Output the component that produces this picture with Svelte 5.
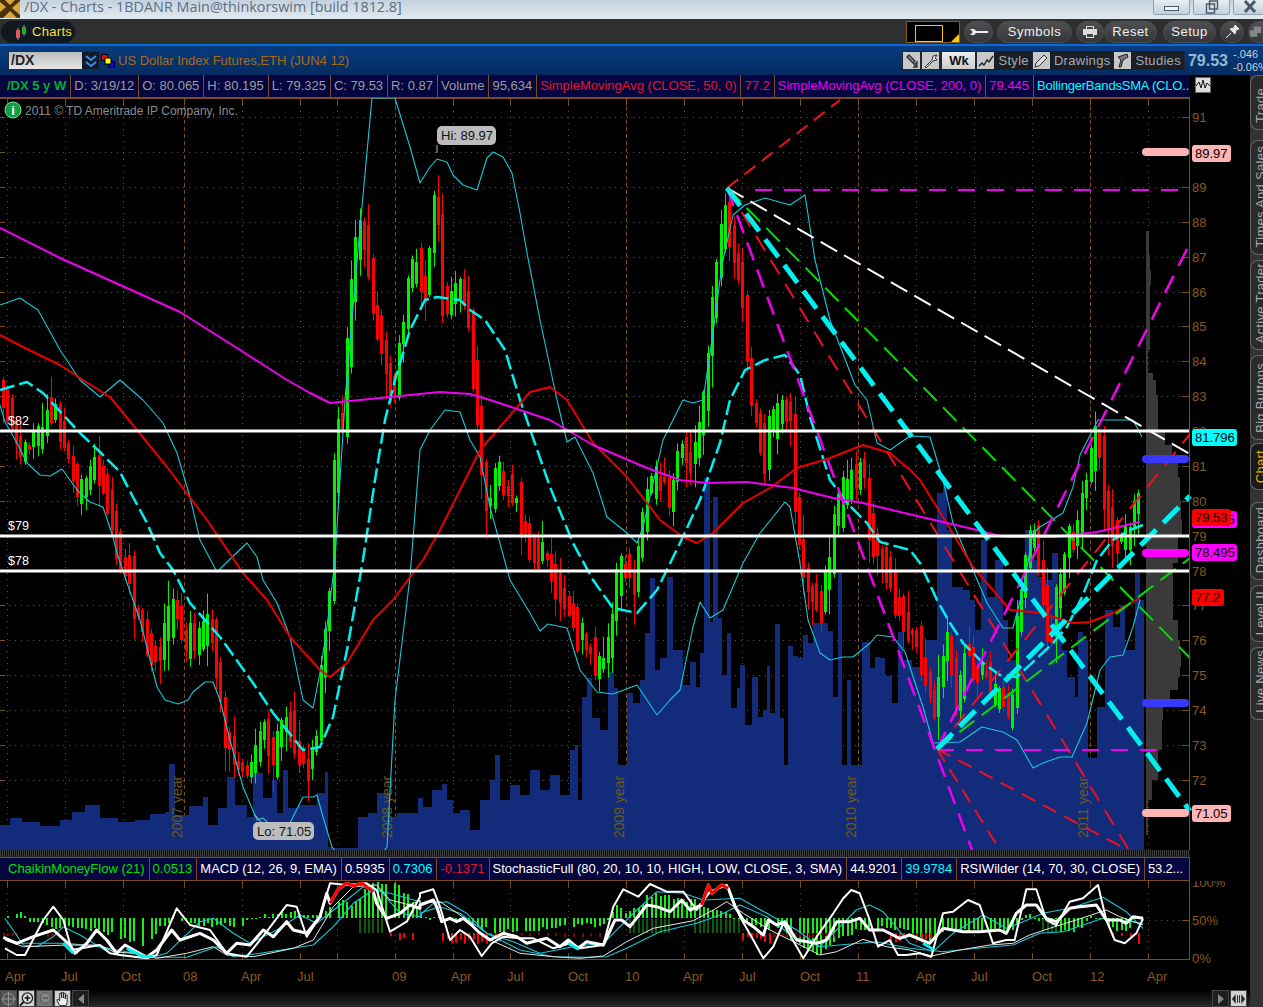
<script>
  // zoom crops were read at 3x, z() maps them back to page pixels
  const z = (ox, oy, a) => a.map(([x, y]) => [ox + x / 3, oy + y / 3]);
  const pts = (a) => a.map(([x, y]) => `${x.toFixed(1)},${y.toFixed(1)}`).join(' ');
  const joinPanels = (l, m, r) => [...z(0, 850, l), ...z(420, 850, m).filter((p) => p[0] < 846), ...z(843, 850, r).filter((p) => p[0] >= 846)];

  function interp(a, x) {
    if (x <= a[0][0]) return a[0][1];
    for (let i = 1; i < a.length; i++) {
      if (x <= a[i][0]) {
        const t = (x - a[i - 1][0]) / (a[i][0] - a[i - 1][0] || 1);
        return a[i - 1][1] + t * (a[i][1] - a[i - 1][1]);
      }
    }
    return a[a.length - 1][1];
  }

  let seed = 17;
  const rnd = () => ((seed = (seed * 16807) % 2147483647) / 2147483647);

  const sma50 = [[0,335],[25,348],[60,365],[83,380],[110,397],[137,430],[167,467],[207,520],[243,573],[267,600],[290,637],[320,670],[330,677],[347,663],[373,620],[393,600],[410,577],[423,560],[440,530],[470,470],[480,450],[500,427],[530,392],[550,387],[567,400],[593,443],[627,477],[660,520],[683,537],[697,543],[713,533],[743,503],[770,488],[797,468],[830,458],[863,445],[890,453],[910,470],[920,480],[943,517],[973,567],[1010,610],[1040,613],[1073,623],[1090,622],[1113,613],[1140,598]];
  const sma200 = [[0,228],[60,258],[120,285],[180,312],[240,350],[287,380],[310,393],[330,403],[350,401],[390,397],[440,392],[470,394],[490,400],[520,410],[550,420],[593,445],[647,468],[680,480],[707,483],[747,482],[793,488],[833,498],[863,503],[900,512],[943,522],[977,530],[1003,537],[1053,537],[1097,532],[1140,522]];
  const bbUp = [[0,305],[20,298],[38,310],[60,350],[80,380],[100,397],[120,380],[143,400],[163,423],[177,453],[190,497],[200,540],[217,572],[227,562],[247,543],[257,557],[263,580],[277,603],[290,637],[303,700],[313,708],[320,673],[327,627],[335,560],[345,400],[358,250],[372,98],[395,98],[410,147],[420,183],[430,167],[437,159],[447,162],[453,175],[463,185],[477,190],[487,158],[493,152],[503,157],[512,173],[520,213],[527,253],[540,320],[557,400],[567,442],[575,437],[593,473],[607,517],[627,533],[637,543],[643,527],[663,440],[683,400],[693,403],[703,400],[712,340],[722,265],[733,215],[745,205],[765,198],[790,205],[805,195],[815,260],[830,320],[855,385],[867,400],[877,443],[890,450],[910,436],[930,437],[943,480],[953,523],[970,563],[987,603],[1003,628],[1013,628],[1023,590],[1033,533],[1040,527],[1063,513],[1073,487],[1080,455],[1098,420],[1120,420],[1133,420],[1142,437]];
  const bbLow = [[0,405],[5,422],[17,443],[27,463],[40,475],[50,476],[62,469],[70,480],[77,490],[90,502],[103,507],[113,537],[117,553],[127,583],[140,620],[157,687],[165,700],[178,704],[188,700],[193,692],[205,682],[213,682],[220,700],[230,740],[243,787],[257,820],[263,818],[283,837],[293,817],[303,797],[313,797],[317,795],[323,817],[332,847],[336,852],[383,852],[387,847],[395,700],[410,577],[420,450],[430,430],[445,410],[460,412],[470,440],[480,457],[490,507],[510,580],[530,613],[540,631],[548,624],[567,628],[580,670],[597,692],[613,694],[637,685],[657,715],[670,700],[680,690],[693,627],[700,602],[710,618],[723,610],[743,563],[760,533],[773,517],[785,502],[790,507],[800,563],[808,620],[820,653],[830,660],[843,657],[853,657],[870,643],[877,635],[893,637],[905,652],[923,707],[933,743],[960,742],[982,727],[1003,732],[1017,740],[1033,768],[1043,763],[1060,757],[1072,757],[1087,723],[1100,670],[1110,657],[1123,655],[1133,627],[1140,600]];
  const bbMid = [[0,390],[27,382],[43,393],[80,433],[100,452],[120,472],[133,497],[147,523],[160,553],[173,570],[190,603],[220,637],[253,683],[273,713],[303,750],[320,747],[333,717],[347,650],[363,560],[375,480],[385,420],[395,380],[410,330],[425,300],[437,297],[460,300],[470,310],[485,320],[505,350],[520,400],[550,487],[573,543],[593,580],[613,608],[637,613],[657,590],[680,543],[700,500],[720,443],[730,400],[745,370],[765,360],[785,355],[800,375],[810,417],[830,480],[847,503],[867,523],[880,542],[910,550],[920,563],[937,600],[950,623],[963,643],[983,663],[1000,675],[1017,677],[1053,643],[1067,627],[1082,597],[1097,560],[1113,540],[1130,530],[1143,525]];
  const closes = [[5,400],[17,447],[27,450],[32,442],[43,423],[53,413],[62,437],[67,453],[72,477],[75,497],[80,483],[88,490],[93,463],[98,473],[107,503],[115,537],[122,573],[128,567],[133,600],[142,627],[152,653],[160,653],[169,610],[178,610],[183,647],[192,637],[200,643],[205,633],[213,633],[218,687],[227,747],[232,760],[240,767],[250,770],[255,750],[263,730],[272,763],[285,717],[290,727],[295,750],[303,760],[308,767],[317,733],[322,660],[326,613],[330,593],[334,475],[338,427],[343,423],[350,300],[358,220],[365,240],[372,310],[380,340],[392,400],[400,340],[408,280],[415,260],[425,290],[432,210],[437,190],[443,320],[450,300],[460,290],[467,310],[475,390],[481,467],[487,513],[490,500],[495,472],[500,477],[508,488],[517,503],[522,527],[530,547],[540,557],[548,563],[553,587],[562,610],[567,603],[575,633],[583,643],[593,657],[602,660],[607,657],[612,623],[615,580],[620,563],[628,570],[633,590],[637,563],[642,517],[647,493],[655,480],[660,480],[670,493],[673,480],[678,447],[687,460],[695,450],[700,417],[705,400],[710,330],[717,260],[725,205],[730,240],[737,270],[745,330],[750,400],[758,417],[763,467],[767,433],[782,400],[790,420],[794,480],[798,540],[803,577],[812,590],[817,600],[820,610],[825,587],[830,557],[834,517],[838,507],[843,493],[848,477],[852,473],[857,487],[861,473],[866,487],[870,540],[878,560],[883,557],[887,573],[892,587],[897,610],[902,610],[906,623],[910,637],[915,630],[920,653],[923,672],[928,687],[933,707],[937,690],[942,660],[946,643],[951,663],[955,697],[959,687],[963,663],[968,645],[973,670],[977,677],[982,673],[986,673],[990,693],[994,697],[999,693],[1003,703],[1008,713],[1013,700],[1017,630],[1027,547],[1031,537],[1036,533],[1039,573],[1044,610],[1049,647],[1052,627],[1057,583],[1062,580],[1066,530],[1071,530],[1076,547],[1080,503],[1085,483],[1088,470],[1093,445],[1098,430],[1102,483],[1107,510],[1115,537],[1120,533],[1124,540],[1129,533],[1133,510],[1142,508]];
  const volume = [[0,825],[10,818],[22,822],[40,826],[60,820],[72,812],[85,805],[100,818],[118,822],[135,820],[150,814],[165,812],[169,764],[175,815],[189,806],[203,797],[208,825],[218,808],[227,777],[235,805],[247,817],[253,773],[263,798],[272,780],[277,813],[283,770],[288,808],[298,805],[307,805],[317,793],[325,772],[328,847],[333,848],[358,817],[368,813],[377,793],[383,793],[390,817],[397,813],[410,813],[418,798],[423,807],[432,790],[442,784],[447,800],[453,813],[460,810],[470,830],[480,800],[490,780],[495,755],[500,800],[510,785],[520,795],[530,770],[540,790],[550,775],[560,795],[570,750],[575,745],[578,800],[582,697],[587,678],[592,718],[600,730],[608,672],[614,688],[618,765],[627,693],[633,703],[640,680],[645,633],[650,578],[655,670],[660,658],[667,577],[673,650],[683,685],[690,662],[696,687],[700,653],[704,478],[710,622],[713,497],[718,618],[722,675],[727,633],[731,708],[737,688],[740,665],[745,725],[752,677],[758,717],[763,710],[767,666],[770,713],[775,624],[780,718],[784,765],[788,646],[793,656],[798,658],[803,635],[808,643],[813,623],[820,623],[828,631],[833,697],[838,573],[842,765],[847,680],[851,765],[862,642],[870,668],[875,657],[880,658],[885,676],[892,703],[898,632],[903,660],[912,667],[925,640],[937,493],[943,480],[947,530],[952,587],[963,590],[970,600],[975,630],[981,540],[987,597],[995,560],[1003,620],[1008,660],[1017,600],[1025,530],[1032,560],[1038,577],[1043,580],[1052,553],[1058,607],[1062,650],[1067,677],[1075,697],[1078,632],[1083,640],[1088,758],[1097,707],[1105,610],[1113,627],[1120,605],[1125,650],[1135,573],[1140,600],[1144,850]];
  const profile = [[231,1149],[255,1150],[270,1151],[285,1150],[350,1148],[373,1153],[380,1156],[395,1158],[420,1158],[430,1165],[445,1172],[460,1178],[477,1180],[500,1181],[520,1182],[535,1178],[563,1173],[590,1173],[620,1178],[640,1180],[653,1181],[667,1180],[677,1178],[690,1170],[707,1163],[720,1162],[750,1158],[780,1152],[800,1148],[835,1146]];

  const volPath = 'M0,850 ' + volume.map(([x, y], i) => `L${x},${y} L${volume[i + 1]?.[0] ?? x},${y}`).join(' ') + ' Z';
  const profPath = 'M1146,231 ' + profile.map(([y, x], i) => `L${x},${y} L${x},${profile[i + 1]?.[0] ?? y}`).join(' ') + ' L1146,835 Z';

  const candles = [];
  let prev = 395;
  for (let i = 0; i < 262; i++) {
    const x = Math.round(3 + i * 4.35);
    const c = interp(closes, x) + (rnd() - 0.5) * 10;
    const o = prev + (rnd() - 0.5) * 6;
    const top = Math.round(Math.min(o, c) - rnd() * 16);
    const bot = Math.round(Math.max(o, c) + rnd() * 16);
    candles.push({
      x, up: c < o, top,
      h: Math.max(bot - top, 3),
      wt: top - 2 - rnd() * rnd() * 26,
      wb: bot + 2 + rnd() * rnd() * 30
    });
    prev = c;
  }

  const prices = [91,90,89,88,87,86,85,84,83,82,81,80,79,78,77,76,75,74,73,72];
  const yOf = (p) => Math.round(187 + (89 - p) * 34.87) + 0.5;
  const quarters = [7,65,123,184,242,300,337,395,453,510,568,626,684,742,800,858,916,974,1032,1090,1148];
  const years = [184,395,626,858,1090];
  const timeLabels = [['Apr',5],['Jul',61],['Oct',121],['08',183],['Apr',241],['Jul',297],['09',392],['Apr',451],['Jul',507],['Oct',568],['10',625],['Apr',683],['Jul',739],['Oct',800],['11',856],['Apr',916],['Jul',971],['Oct',1032],['12',1090],['Apr',1147]];
  const yearMarks = [['2007 year',182],['2008 year',392],['2009 year',624],['2010 year',856],['2011 year',1088]];

  // fans drawn from the swing high and the swing low
  const hi = [727, 188], lo = [937, 749];
  const trend = [
    { a: hi, b: [1190, 454], c: '#fff', w: 2, d: '19 8' },
    { a: hi, b: [840, 100], c: '#f01020', w: 2, d: '14 8' },
    { a: hi, b: [1129, 850], c: '#f01020', w: 2, d: '17 11' },
    { a: hi, b: [972, 850], c: '#f000f0', w: 2.5, d: '19 10' },
    { a: hi, b: [1190, 658], c: '#00e000', w: 2, d: '19 9' },
    { a: [755, 190], b: [1190, 190], c: '#f000f0', w: 2, d: '17 12' },
    { a: [937, 750], b: [1160, 750], c: '#f000f0', w: 2, d: '17 12' },
    { a: lo, b: [1190, 434], c: '#f01020', w: 2, d: '17 11' },
    { a: lo, b: [1190, 243], c: '#f000f0', w: 2.5, d: '19 11' },
    { a: lo, b: [1190, 558], c: '#00e000', w: 2, d: '19 9' },
    { a: lo, b: [1128, 850], c: '#f01020', w: 2, d: '15 9' },
    { a: lo, b: [1000, 850], c: '#f01020', w: 2, d: '15 9' },
    { a: hi, b: [1190, 811], c: '#00f0f0', w: 5, d: '22 10' },
    { a: lo, b: [1190, 496], c: '#00f0f0', w: 5, d: '22 10' }
  ];
  const levels = [431, 536, 571];
  const pills = [[152,'#ffb4b4'],[459,'#3838ff'],[553,'#ff00ff'],[703,'#3838ff'],[813,'#ffb4b4']];
  const tags = [
    { t: '89.97', y: 145, w: 39, bg: '#ffb4b4' },
    { t: '81.796', y: 429, w: 45, bg: '#00ffff' },
    { t: '79.445', y: 511, w: 45, bg: '#ff00ff' },
    { t: '79.53', y: 509, w: 39, bg: '#ff0000' },
    { t: '78.495', y: 544, w: 45, bg: '#ff00ff' },
    { t: '77.2', y: 589, w: 32, bg: '#ff0000' },
    { t: '71.05', y: 805, w: 39, bg: '#ffb4b4' }
  ];

  const rsi = joinPanels(
    [[10,262],[50,280],[100,260],[160,240],[210,285],[225,310],[260,280],[290,240],[320,270],[350,310],[375,285],[410,305],[440,322],[470,300],[515,240],[540,270],[600,250],[640,270],[680,310],[710,280],[750,285],[790,240],[820,260],[860,215],[880,240],[920,250],[960,200],[980,130],[990,160],[1015,118],[1040,100],[1060,108],[1085,100],[1120,125],[1130,160],[1160,205],[1200,190],[1230,165],[1260,175]],
    [[0,165],[40,150],[50,170],[65,215],[90,205],[110,215],[130,205],[155,225],[175,245],[210,270],[250,250],[290,260],[320,280],[380,265],[420,290],[445,270],[475,295],[500,275],[550,285],[585,210],[605,210],[630,230],[680,165],[710,170],[750,185],[785,150],[810,180],[845,165],[865,105],[875,130],[905,105],[925,115],[945,170],[970,210],[1000,230],[1030,255],[1045,210],[1070,225],[1095,215],[1130,270],[1190,280],[1220,270],[1250,215],[1290,220]],
    [[0,230],[20,215],[50,205],[80,240],[120,240],[170,265],[200,255],[260,280],[300,235],[360,245],[410,245],[470,240],[490,250],[520,190],[550,165],[580,165],[610,205],[640,215],[680,175],[710,170],[760,165],[790,210],[830,210],[850,220],[870,200],[900,205]]
  );
  const stochK = joinPanels(
    [[15,295],[50,315],[75,315],[130,210],[160,170],[190,210],[215,300],[300,285],[330,310],[360,315],[440,325],[470,315],[530,175],[570,225],[630,240],[680,310],[740,320],[800,245],[860,165],[890,170],[920,260],[960,200],[990,100],[1040,105],[1100,100],[1130,120],[1170,245],[1220,215],[1260,140]],
    [[0,130],[40,118],[60,170],[90,270],[120,240],[150,260],[185,318],[215,280],[250,260],[300,265],[340,265],[400,295],[450,280],[480,295],[550,285],[580,170],[610,118],[655,140],[690,102],[740,125],[790,125],[830,180],[870,125],[920,105],[960,200],[1000,270],[1030,325],[1060,290],[1090,220],[1130,290],[1150,325],[1190,260],[1240,190],[1270,145],[1290,130]],
    [[0,150],[25,120],[50,130],[80,210],[105,290],[140,270],[165,315],[190,315],[230,310],[265,320],[300,190],[330,185],[375,150],[410,165],[450,280],[490,270],[515,270],[550,118],[580,118],[610,210],[640,225],[680,155],[720,145],[765,105],[790,210],[815,270],[845,280],[880,250],[900,205]]
  );
  const stochD = joinPanels(
    [[15,270],[70,290],[200,285],[300,285],[340,305],[400,310],[470,325],[560,310],[640,290],[680,315],[760,320],[880,295],[940,270],[1000,170],[1060,110],[1130,105],[1170,150],[1230,165],[1260,150]],
    [[0,160],[60,155],[120,195],[200,265],[300,310],[400,320],[480,325],[550,318],[620,275],[700,235],[820,212],[880,180],[920,155],[970,190],[1050,240],[1130,280],[1200,315],[1250,305],[1290,285]],
    [[0,290],[60,268],[130,290],[200,300],[265,318],[350,300],[440,285],[510,280],[560,255],[620,235],[700,210],[790,180],[830,200],[900,225]]
  );
  const cyan1 = joinPanels(
    [[15,205],[70,285],[110,290],[160,260],[190,230],[240,255],[330,310],[440,325],[500,310],[600,215],[640,205],[700,250],[750,280],[830,240],[900,195],[950,220],[1040,150],[1090,110],[1140,120],[1200,190],[1260,200]],
    [[0,195],[40,160],[80,155],[140,190],[200,250],[280,275],[360,310],[460,290],[500,285],[550,280],[600,230],[650,180],[710,125],[790,130],[850,150],[960,145],[1040,190],[1130,240],[1200,290],[1290,270]],
    [[0,240],[40,180],[80,165],[120,185],[200,280],[270,305],[330,250],[420,195],[490,235],[530,220],[600,190],[680,175],[780,142],[850,185],[900,235]]
  );
  const cyan2 = joinPanels(
    [[15,265],[60,280],[200,280],[300,290],[350,300],[470,322],[560,322],[650,290],[700,320],[780,310],[940,285],[1000,230],[1060,160],[1120,120],[1170,130],[1260,155]],
    [[0,190],[60,170],[120,190],[200,250],[300,300],[400,320],[500,322],[560,320],[620,295],[720,245],[830,220],[900,195],[960,165],[1040,200],[1120,260],[1200,290],[1290,290]],
    [[0,290],[100,275],[200,295],[300,305],[400,295],[510,285],[590,250],[660,245],[780,205],[900,220]]
  );
  const redFlags = [z(0, 850, [[990,160],[1015,118],[1040,100],[1060,108],[1085,100],[1120,125]]), z(420, 850, [[845,165],[865,105],[875,130],[905,105],[925,115]])];
  const cyanFlags = [z(0, 850, [[190,280],[220,310]]), z(0, 850, [[380,295],[430,320],[460,318]]), z(420, 850, [[445,280],[475,298]]), z(843, 850, [[240,280],[270,298]])];

  const histKeys = joinPanels(
    [[20,200],[30,195],[65,185],[80,205],[100,220],[200,235],[300,240],[370,270],[440,290],[470,240],[520,205],[600,225],[720,225],[780,195],[800,195],[900,190],[960,195],[1000,150],[1040,155],[1060,170],[1100,100],[1180,95],[1240,160]],
    [[0,195],[40,205],[80,204],[150,225],[230,245],[320,240],[400,235],[470,225],[550,225],[590,170],[620,185],[650,180],[680,135],[720,135],[770,150],[820,150],[880,180],[950,200],[1000,230],[1080,240],[1150,300],[1200,315],[1250,265],[1290,220]],
    [[0,265],[50,240],[100,235],[200,245],[265,285],[300,240],[400,245],[500,240],[550,185],[580,210],[640,245],[700,240],[750,195],[800,230],[840,245],[900,190]]
  );
  const zero = 918;
  const hist = [];
  for (let i = 0; i < 260; i++) {
    const x = Math.round(7 + i * 4.35);
    if (x > 1143) break;
    const v = Math.round(interp(histKeys, x) + (rnd() - 0.5) * 5);
    if (rnd() < 0.07) continue;
    hist.push({ x, y: Math.min(v, zero), h: Math.max(Math.abs(v - zero), 1) });
  }
  const darkBars = [[355,385],[627,673],[693,740],[1040,1060]];
  const dark = hist.filter((b) => darkBars.some(([a, e]) => b.x > a && b.x < e));
  const redBars = [];
  for (let i = 0; i < 262; i++) {
    const x = Math.round(3 + i * 4.35);
    const hot = (x > 386 && x < 416 && i % 3 > 0) || (x > 440 && x < 500) || (x > 740 && x < 770) || (x > 886 && x < 933) || (x > 1110 && x < 1143 && i % 2);
    const mid = (x > 33 && x < 60) || (x > 500 && x < 603 && i % 2) || (x > 770 && x < 837) || x < 20;
    if (hot || mid) redBars.push({ x, h: hot ? 2 + rnd() * 9 : 2 + rnd() * 3, c: hot ? '#ff0000' : '#8a0000' });
  }

  const tabs = [
    { t: 'Trade', y: 0, h: 55 },
    { t: 'Times And Sales', y: 10, h: 115 },
    { t: 'Active Trader', y: 5, h: 90 },
    { t: 'Big Buttons', y: 5, h: 85 },
    { t: 'Chart', y: 3, h: 47, on: true },
    { t: 'Dashboard', y: 12, h: 78 },
    { t: 'Level II', y: 5, h: 57 },
    { t: 'Live News', y: 5, h: 73 }
  ];

  const topInfo = [
    { t: '/DX 5 y W', c: 'sym' }, { t: 'D: 3/19/12' }, { t: 'O: 80.065' }, { t: 'H: 80.195' }, { t: 'L: 79.325' }, { t: 'C: 79.53' }, { t: 'R: 0.87' }, { t: 'Volume' }, { t: '95,634' },
    { t: 'SimpleMovingAvg (CLOSE, 50, 0)', c: 'red' }, { t: '77.2', c: 'red' },
    { t: 'SimpleMovingAvg (CLOSE, 200, 0)', c: 'mag' }, { t: '79.445', c: 'mag' },
    { t: 'BollingerBandsSMA (CLO...', c: 'cya grow' }
  ];
  const lowInfo = [
    { t: 'ChaikinMoneyFlow (21)', c: 'grn lead' }, { t: '0.0513', c: 'grn' },
    { t: 'MACD (12, 26, 9, EMA)', c: 'wht' }, { t: '0.5935', c: 'wht' }, { t: '0.7306', c: 'cya' }, { t: '-0.1371', c: 'red' },
    { t: 'StochasticFull (80, 20, 10, 10, HIGH, LOW, CLOSE, 3, SMA)', c: 'wht' }, { t: '44.9201', c: 'wht' }, { t: '39.9784', c: 'cya' },
    { t: 'RSIWilder (14, 70, 30, CLOSE)', c: 'wht' }, { t: '53.2...', c: 'wht grow' }
  ];
</script>

<div class="app">
  <div class="title">
    <svg class="logo" viewBox="0 0 20 19" width="20" height="19">
      <rect width="20" height="19" fill="#4a3208" />
      <path d="M0 3l6 5-6 5zM20 2l-8 7 8 7zM4 0l6 6 6-6zM3 19l7-7 7 7z" fill="#d9a93a" />
    </svg>
    <span>/DX - Charts - 1BDANR Main@thinkorswim [build 1812.8]</span>
    <div class="win">
      <div class="wbtn"><i class="min"></i></div>
      <div class="wbtn"><svg viewBox="0 0 14 14" width="14" height="14"><path d="M4.5 1h8v8h-8zM1.5 4h8v9h-8z" fill="#d8e0e8" stroke="#4a5a68" stroke-width="1.4" /></svg></div>
      <div class="wbtn last"><svg viewBox="0 0 14 14" width="14" height="14"><path d="M2 1l10 11M12 1L2 12" stroke="#4a5a68" stroke-width="3" /></svg></div>
    </div>
  </div>

  <div class="tabs">
    <div class="charts-tab">
      <svg viewBox="0 0 16 16" width="16" height="16">
        <path d="M5 4v12M11 1v11" stroke="#999" />
        <rect x="3" y="6" width="4" height="8" fill="#e0595a" />
        <rect x="9" y="3" width="4" height="7" fill="#18b020" />
      </svg>
      <span>Charts</span>
    </div>
    <div class="spacer"></div>
    <div class="colorbox"><i></i><b></b></div>
    <button class="pill ico"><svg viewBox="0 0 20 10" width="20" height="10"><path d="M1 2h4l2 2h12v2H7L5 8H1l3-3z" fill="#eee" /></svg></button>
    <button class="pill sym-btn">Symbols</button>
    <button class="pill ico prn"><svg viewBox="0 0 14 12" width="14" height="12"><path d="M3 0h8v3h3v6h-3v3H3V9H0V3h3z" fill="#ddd" /><path d="M4 8h6v3H4zM4 1h6v2H4z" fill="#444" /></svg></button>
    <button class="pill rst">Reset</button>
    <button class="pill stp">Setup</button>
    <button class="pill ico pin"><svg viewBox="0 0 14 14" width="14" height="14"><path d="M1 13l5-5M5 4l5 5 1-4 3-1-4-4-1 3z" fill="#e8e8e8" stroke="#e8e8e8" /></svg></button>
    <button class="pill ico tail"><svg viewBox="0 0 14 14" width="14" height="14"><path d="M5 1h8v7H9v4H1V5h4z" fill="#888" /></svg></button>
  </div>

  <div class="symbar">
    <div class="combo">
      <span>/DX</span>
      <div class="drop"><svg viewBox="0 0 12 12" width="12" height="12"><path d="M1 1l5 4 5-4M1 7l5 4 5-4" fill="none" stroke="#3a8ae8" stroke-width="2" /></svg></div>
    </div>
    <svg class="squares" viewBox="0 0 14 14" width="14" height="14">
      <rect x="0.5" y="0.5" width="6" height="6" fill="#f00" stroke="#000" />
      <rect x="7.5" y="7.5" width="6" height="6" fill="#00f" stroke="#000" />
      <rect x="4" y="4" width="6" height="6" fill="#ff0" stroke="#000" />
    </svg>
    <span class="desc">US Dollar Index Futures,ETH (JUN4 12)</span>
    <div class="spacer"></div>
    <div class="sbtns">
      <i class="sq lone"><svg viewBox="0 0 16 16" width="16" height="16"><path d="M5 2l6 6-2 2-6-6zM9 10l4 4M11 11l2-2v5H9" stroke="#333" stroke-width="1.4" fill="#888" /></svg></i>
      <i class="sq lone"><svg viewBox="0 0 16 16" width="16" height="16"><path d="M2 14l7-7 1-4 4-1-2 3 2 2-4 1-7 7z" fill="#eee" stroke="#333" /></svg></i>
      <b class="wk">Wk</b>
      <span class="sb"><i class="sq"><svg viewBox="0 0 16 16" width="16" height="16"><path d="M1 13l3-3 2 2 3-5 2 2 4-6" fill="none" stroke="#222" stroke-width="1.4" /></svg></i>Style</span>
      <span class="sb"><i class="sq"><svg viewBox="0 0 16 16" width="16" height="16"><path d="M2 14l1-4 8-8 3 3-8 8z" fill="#ddd" stroke="#333" /></svg></i>Drawings</span>
      <span class="sb"><i class="sq"><svg viewBox="0 0 16 16" width="16" height="16"><path d="M4 14l2-7-3-3 9-3 1 3-5 3-2 7z" fill="#777" stroke="#222" /></svg></i>Studies</span>
    </div>
    <strong class="last-px">79.53</strong>
    <div class="chg"><span>-.046</span><span>-0.06%</span></div>
  </div>

  <div class="main">
    <div class="chart-col">
      <div class="inforow">
        <div class="cells">
          {#each topInfo as c}<span class="cell {c.c ?? ''}">{c.t}</span>{/each}
        </div>
        <div class="study-ico"><svg viewBox="0 0 16 16" width="16" height="16"><rect x="0.5" y="0.5" width="15" height="15" fill="#ddd" stroke="#666" /><path d="M1 9l3-4 2 6 2-8 2 8 2-5 3 3" fill="none" stroke="#111" /></svg></div>
      </div>

      <svg class="plot" viewBox="0 98 1250 752" width="1250" height="752">
        <line class="frame" x1="0" y1="98.5" x2="1189" y2="98.5" />
        {#each prices as p}
          <line class="dot" x1="3" y1={yOf(p)} x2="1182" y2={yOf(p)} />
          <line class="frame" x1="1182" y1={yOf(p)} x2="1189" y2={yOf(p)} />
          <line class="frame" x1="0" y1={yOf(p)} x2="5" y2={yOf(p)} />
        {/each}
        {#each quarters as x}
          <line class={years.includes(x) ? 'yr' : 'dotv'} x1={x + 0.5} y1="99" x2={x + 0.5} y2="850" />
          <line class="frame" x1={x + 0.5} y1="98" x2={x + 0.5} y2="105" />
        {/each}
        <path d={volPath} fill="#132b7b" />
        <path d={profPath} fill="#3a3a3a" />
        {#each yearMarks as [t, x]}
          <text class="yrmark" transform="translate({x},838) rotate(-90)">{t}</text>
        {/each}

        {#each candles as k}
          <line x1={k.x + 0.5} x2={k.x + 0.5} y1={k.wt} y2={k.wb} stroke={k.up ? '#00f000' : '#ff0000'} />
          <rect x={k.x - 1} y={k.top} width="3" height={k.h} fill={k.up ? '#00f000' : '#ff0000'} />
        {/each}

        <polyline class="ln" points={pts(bbUp)} stroke="#18c8d8" stroke-width="1.1" />
        <polyline class="ln" points={pts(bbLow)} stroke="#18c8d8" stroke-width="1.1" />
        <polyline class="ln mid" points={pts(bbMid)} />
        <polyline class="ln" points={pts(sma50)} stroke="#e80000" stroke-width="2" />
        <polyline class="ln" points={pts(sma200)} stroke="#f000f0" stroke-width="2" />

        {#each trend as l}
          <line x1={l.a[0]} y1={l.a[1]} x2={l.b[0]} y2={l.b[1]} stroke={l.c} stroke-width={l.w} stroke-dasharray={l.d} />
        {/each}

        {#each levels as y}
          <line x1="0" x2="1189" y1={y} y2={y} stroke="#fff" stroke-width="3" />
        {/each}
        <text class="note" x="8" y="425">$82</text>
        <text class="note" x="8" y="530">$79</text>
        <text class="note" x="8" y="565">$78</text>

        <circle cx="13" cy="110" r="8" fill="#0fa040" stroke="#7ee08a" />
        <text class="info-i" x="13" y="115">i</text>
        <text class="copy" x="25" y="115">2011 © TD Ameritrade IP Company, Inc.</text>

        <line x1="437" y1="145" x2="437" y2="153" stroke="#bbb" />
        <rect class="callout" x="437" y="126" width="59" height="19" rx="5" />
        <text class="callout-t" x="441" y="140">Hi: 89.97</text>
        <line x1="255" y1="815" x2="262" y2="823" stroke="#bbb" />
        <rect class="callout" x="253" y="822" width="61" height="18" rx="5" />
        <text class="callout-t" x="257" y="836">Lo: 71.05</text>

        <line class="frame" x1="1189.5" y1="98" x2="1189.5" y2="850" />
        {#each prices as p}
          <text class="axis" x="1192" y={yOf(p) + 4}>{p}</text>
        {/each}
        {#each pills as [y, c]}
          <rect x="1142" y={y - 4} width="47" height="8" rx="4" fill={c} />
        {/each}
        {#each tags as g}
          <rect x="1192" y={g.y} width={g.w} height="17" rx="3" fill={g.bg} />
          <text class="tag" x="1195" y={g.y + 13}>{g.t}</text>
        {/each}
      </svg>

      <div class="hatch"></div>

      <div class="inforow low">
        <div class="cells">
          {#each lowInfo as c}<span class="cell {c.c ?? ''}">{c.t}</span>{/each}
        </div>
      </div>

      <svg class="plot" viewBox="0 881 1250 109" width="1250" height="109">
        <line class="frame" x1="0" y1="959.5" x2="1189" y2="959.5" />
        <line class="frame" x1="1189.5" y1="881" x2="1189.5" y2="960" />
        {#each quarters as x}
          <line class="frame" x1={x + 0.5} y1="881" x2={x + 0.5} y2="887" />
          <line class="frame" x1={x + 0.5} y1="953" x2={x + 0.5} y2="959" />
          <line class="dotv" x1={x + 0.5} y1="887" x2={x + 0.5} y2="953" />
        {/each}
        <line class="dot" x1="1143" y1="920.5" x2="1182" y2="920.5" />
        <line class="frame" x1="1182" y1="920.5" x2="1189" y2="920.5" />
        {#each hist as b}
          <rect x={b.x} y={b.y} width="2" height={b.h} fill="#14f014" />
        {/each}
        {#each dark as b}
          <rect x={b.x} y="919" width="2" height="14" fill="#0b5c0b" />
        {/each}
        {#each redBars as b}
          <rect x={b.x} y="933" width="2" height={b.h} fill={b.c} />
        {/each}
        <polyline class="ln" points={pts(cyan1)} stroke="#18c8d8" stroke-width="1.1" />
        <polyline class="ln" points={pts(cyan2)} stroke="#18c8d8" stroke-width="1.1" />
        <polyline class="ln" points={pts(stochD)} stroke="#e8e8e8" />
        <polyline class="ln" points={pts(stochK)} stroke="#fff" stroke-width="2" />
        <polyline class="ln" points={pts(rsi)} stroke="#fff" stroke-width="3" />
        {#each redFlags as f}
          <polyline class="ln" points={pts(f)} stroke="#ff0000" stroke-width="3" />
        {/each}
        {#each cyanFlags as f}
          <polyline class="ln" points={pts(f)} stroke="#00f0f0" stroke-width="3" />
        {/each}
        <text class="axis" x="1192" y="887">100%</text>
        <text class="axis" x="1192" y="925">50%</text>
        <text class="axis" x="1192" y="963">0%</text>
        {#each timeLabels as [t, x]}
          <text class="axis" x={x} y="981">{t}</text>
        {/each}
      </svg>

      <div class="foot">
        <div class="fbtns">
          <i class="fb cross"><svg viewBox="0 0 16 16" width="16" height="16"><circle cx="8" cy="8" r="6" fill="none" stroke="#999" /><path d="M8 0v16M0 8h16" stroke="#999" /></svg></i>
          <i class="fb"><svg viewBox="0 0 16 16" width="16" height="16"><circle cx="9" cy="7" r="5.5" fill="#ddd" stroke="#222" stroke-width="1.4" /><path d="M9 4v6M6 7h6" stroke="#111" stroke-width="1.6" /><path d="M5 11l-4 4" stroke="#111" stroke-width="2" /></svg></i>
          <i class="fb off"><svg viewBox="0 0 16 16" width="16" height="16"><circle cx="9" cy="7" r="5.5" fill="#888" stroke="#555" /><path d="M6 7h6" stroke="#555" stroke-width="1.6" /></svg></i>
          <i class="fb"><svg viewBox="0 0 16 16" width="16" height="16"><path d="M5 15L2 9l1-1 2 2V2h2v5V1h2v6V2h2v6V4h2v7l-1 4z" fill="#eee" stroke="#222" /></svg></i>
          <i class="fb nav"><svg viewBox="0 0 8 10" width="8" height="10"><path d="M7 0v10L1 5z" fill="#888" /></svg></i>
        </div>
        <div class="spacer"></div>
        <div class="fbtns">
          <i class="fb nav"><svg viewBox="0 0 8 10" width="8" height="10"><path d="M1 0v10l6-5z" fill="#888" /></svg></i>
          <i class="fb"><svg viewBox="0 0 16 12" width="16" height="12"><path d="M5 1v10L1 6zM11 1v10l4-5z" fill="#222" /><path d="M7 2v8M9 2v8" stroke="#222" /></svg></i>
        </div>
      </div>
    </div>

    <div class="rail">
      {#each tabs as t}
        <div class="tab" class:on={t.on} style="height: {t.h}px; margin-top: {t.y}px"><span>{t.t}</span></div>
      {/each}
    </div>
  </div>
</div>

<style>
  :global(body) { margin: 0; background: #000; }
  .app {
    width: 1263px; height: 1007px; overflow: hidden;
    display: flex; flex-direction: column;
    font-family: "Liberation Sans", Arial, sans-serif; background: #000;
  }
  .spacer { flex: 1; }

  .title {
    height: 19px; flex: none; display: flex; align-items: flex-start; overflow: hidden;
    background: linear-gradient(#c4d2df, #e2e9f0);
    color: #5c6f82; font: 14.4px/13px "Open Sans", sans-serif; white-space: nowrap;
  }
  .title span { margin: 0 0 0 4px; }
  .logo { margin-top: -1px; }
  .win { margin-left: auto; display: flex; gap: 3px; }
  .wbtn {
    width: 37px; height: 15px; box-sizing: border-box; display: flex; align-items: center; justify-content: center;
    background: linear-gradient(#e6edf3, #c2d0dc); border: 1px solid #8ea0b2; border-top: 0; border-radius: 0 0 3px 3px;
  }
  .wbtn.last { width: 34px; margin-right: -4px; }
  .min { width: 13px; height: 3px; margin-top: 3px; background: #eef2f6; border: 1px solid #4a5a68; display: block; }

  .tabs { height: 25px; flex: none; display: flex; align-items: center; background: #2f2f2f; }
  .charts-tab {
    margin-left: 1px; width: 74px; height: 22px; box-sizing: border-box; padding-left: 12px;
    display: flex; align-items: center; gap: 3px; border-radius: 11px; background: #101820;
    color: #ffdf3c; font-size: 13px; letter-spacing: 0.3px;
  }
  .colorbox {
    width: 54px; height: 22px; box-sizing: border-box; border: 1px solid #8a5a14; background: #000; position: relative;
  }
  .colorbox i { position: absolute; left: 8px; top: 3px; width: 28px; height: 17px; box-sizing: border-box; border: 1px solid #ffc800; display: block; }
  .colorbox b { position: absolute; right: 0; bottom: 0; border: 4px solid transparent; border-right-color: #ffc800; border-bottom-color: #ffc800; }
  .pill {
    height: 22px; padding: 0; box-sizing: border-box; border: 1px solid #484f58; border-radius: 11px;
    background: linear-gradient(#4e4f52, #353638); color: #eee;
    font: 13px "Liberation Sans", sans-serif; letter-spacing: 0.5px;
    display: flex; align-items: center; justify-content: center;
  }
  .pill.ico { width: 29px; margin-left: 4px; }
  .pill.sym-btn { width: 75px; margin-left: 4px; }
  .pill.prn { width: 28px; }
  .pill.rst { width: 53px; }
  .pill.stp { width: 53px; margin-left: 6px; }
  .pill.pin { width: 24px; }
  .pill.tail { width: 15px; border-radius: 11px 0 0 11px; overflow: hidden; }

  .symbar {
    height: 31px; flex: none; box-sizing: border-box; border-top: 2px solid #0a6ad8;
    display: flex; align-items: center;
    background: linear-gradient(#083c80, #052c60);
  }
  .combo {
    margin-left: 8px; width: 92px; height: 19px; box-sizing: border-box; border: 1px solid #1e2d40;
    display: flex; background: linear-gradient(#bbb, #e6e6e6);
  }
  .combo span { flex: 1; padding-left: 2px; color: #222; font-size: 14px; font-weight: bold; line-height: 17px; }
  .drop { width: 17px; background: #111a28; display: flex; align-items: center; justify-content: center; }
  .squares { margin-left: 1px; }
  .desc { margin-left: 3px; color: #a86c10; font-size: 13px; }
  .sbtns { display: flex; align-items: center; height: 19px; background: #1c2836; gap: 1px; padding: 0 1px; }
  .sq { width: 17px; height: 17px; background: #c8c8c8; display: flex; align-items: center; justify-content: center; margin-right: 4px; }
  .sq.lone { margin-right: 1px; }
  .wk { width: 33px; height: 17px; margin: 0 1px; background: linear-gradient(#eee, #ccc); color: #111; font-size: 13px; text-align: center; line-height: 17px; }
  .sb { display: flex; align-items: center; color: #a4aab2; font-size: 13px; letter-spacing: 0.3px; padding-right: 3px; height: 19px; background: #1a1f26; }
  .last-px { margin-left: 3px; color: #9ab6d0; font-size: 16px; }
  .chg { width: 30px; flex: none; margin-left: 5px; display: flex; flex-direction: column; color: #c8d2dc; font-size: 11px; line-height: 13px; white-space: nowrap; overflow: hidden; }

  .main { flex: 1; display: flex; min-height: 0; }
  .chart-col { width: 1250px; flex: none; display: flex; flex-direction: column; }
  .plot { display: block; flex: none; background: #000; }

  .inforow { height: 23px; flex: none; display: flex; }
  .inforow.low { height: 24px; }
  .cells { width: 1190px; flex: none; display: flex; background: #05053f; border-bottom: 1px solid #7a4e14; box-sizing: border-box; overflow: hidden; }
  .low .cells { border-top: 1px solid #7a4e14; border-right: 1px solid #7a4e14; }
  .cell {
    padding: 0 4px 0 3px; box-sizing: border-box; border-right: 1px solid #7a4e14;
    color: #9c9c9c; font-size: 13px; line-height: 22px; white-space: nowrap;
  }
  .cell.grow { flex: 1; border-right: 0; letter-spacing: -0.2px; }
  .cell.sym { color: #00b030; font-weight: bold; padding-left: 7px; }
  .cell.lead { padding-left: 8px; }
  .cell.red { color: #e8142a; }
  .cell.mag { color: #f000f0; }
  .cell.cya { color: #00ffff; }
  .cell.grn { color: #00e000; }
  .cell.wht { color: #fff; }
  .study-ico { margin: 2px 0 0 5px; height: 16px; }

  .hatch {
    height: 7px; flex: none; width: 1190px;
    background: repeating-linear-gradient(90deg, #3a3a3a 0 1px, #111 1px 2px);
  }

  .frame { stroke: #7a4e14; stroke-width: 1; }
  .dot { stroke: #7a4e14; stroke-width: 1; stroke-dasharray: 1 5; }
  .dotv { stroke: #7a4e14; stroke-width: 1; stroke-dasharray: 1 5; }
  .yr { stroke: #7a4e14; stroke-width: 1; stroke-dasharray: 4 3; }
  .ln { fill: none; stroke-linejoin: round; }
  .mid { stroke: #00f0f0; stroke-width: 2.5; stroke-dasharray: 15 5; }
  .yrmark { fill: #6e5a18; font-size: 14px; }
  .note { fill: #fff; font-size: 12.5px; }
  .copy { fill: #8c8c8c; font-size: 12px; }
  .info-i { fill: #fff; font-size: 13px; font-weight: bold; text-anchor: middle; }
  .callout { fill: #bcbcbc; }
  .callout-t { fill: #111; font-size: 13px; }
  .axis { fill: #8a5a1c; font-size: 13px; }
  .tag { fill: #000; font-size: 13px; }

  .foot {
    height: 17px; flex: none; display: flex;
    background: linear-gradient(#000, #2a2a2a);
  }
  .fbtns { display: flex; gap: 1px; margin-right: 3px; }
  .fb {
    width: 17px; height: 17px; display: flex; align-items: center; justify-content: center;
    background: #d0d0d0; box-sizing: border-box; border: 1px solid #444;
  }
  .fb.cross { background: #555; }
  .fb.off { background: #777; }
  .fb.nav { background: #1e1e1e; }

  .rail { flex: 1; background: #333; overflow: hidden; min-width: 0; }
  .tab {
    box-sizing: border-box; width: 20px; padding-bottom: 6px; border: 1px solid #666; border-right: 0; border-radius: 8px 0 0 8px;
    background: #2b2b2b; color: #aaa; font-size: 13px; letter-spacing: 0.3px;
    display: flex; align-items: flex-end; justify-content: center; overflow: hidden;
  }
  .tab span { writing-mode: vertical-rl; transform: rotate(180deg); white-space: nowrap; }
  .tab.on { color: #f0b400; background: #191919; }
</style>
